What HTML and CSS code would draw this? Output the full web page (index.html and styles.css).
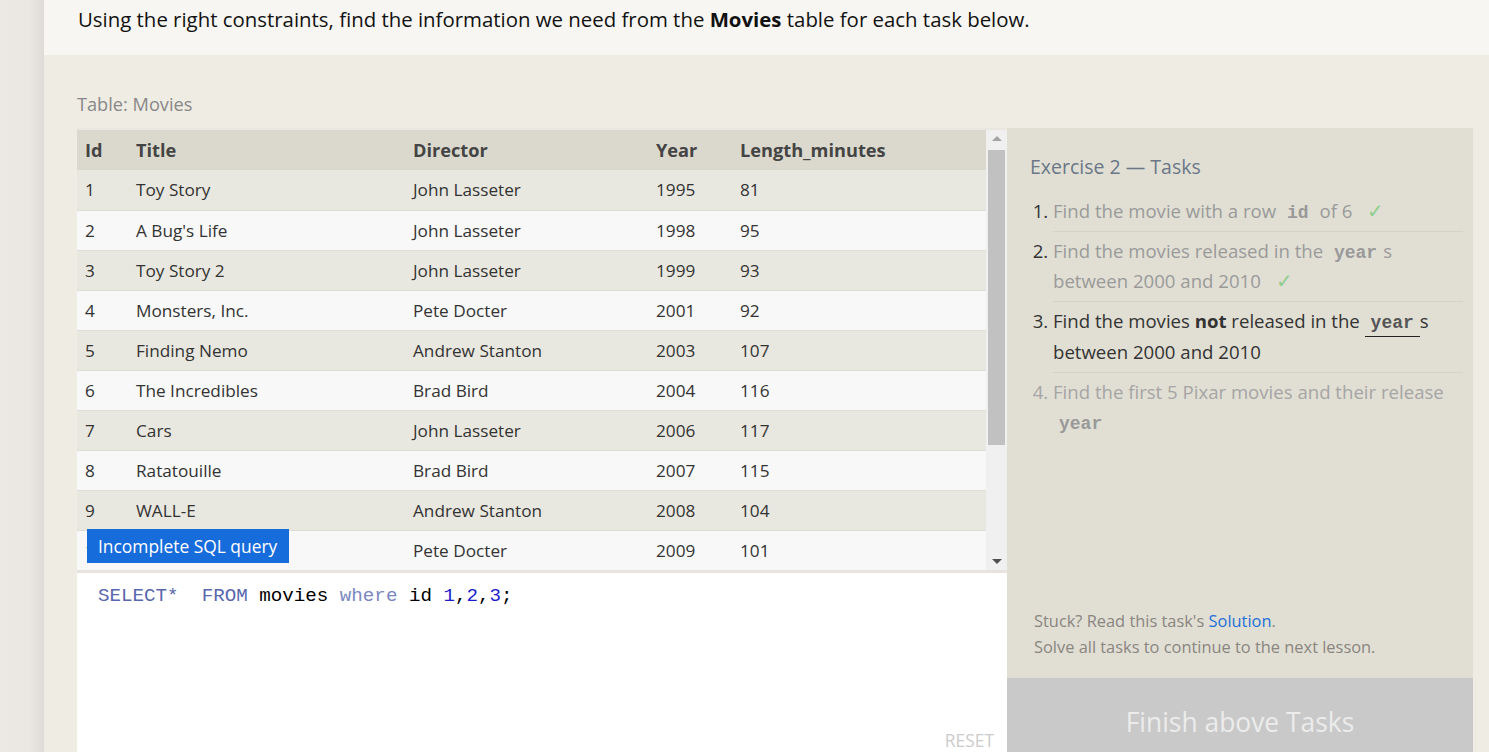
FILE: index.html
```html
<!DOCTYPE html>
<html>
<head>
<meta charset="utf-8">
<link rel="stylesheet" href="styles.css">
</head>
<body>
<div class="strip"></div>
<div class="main">
  <div class="intro">Using the right constraints, find the information we need from the <b>Movies</b> table for each task below.</div>
  <div class="content">
    <div class="table-label">Table: Movies</div>
    <div class="workspace">
      <div class="left">
        <div class="table-box">
          <div class="table-scroll">
            <table class="movies">
              <colgroup><col class="c-id"><col class="c-title"><col class="c-dir"><col class="c-year"><col></colgroup>
              <thead>
                <tr><th>Id</th><th>Title</th><th>Director</th><th>Year</th><th>Length_minutes</th></tr>
              </thead>
              <tbody>
                <tr><td>1</td><td>Toy Story</td><td>John Lasseter</td><td>1995</td><td>81</td></tr>
                <tr><td>2</td><td>A Bug's Life</td><td>John Lasseter</td><td>1998</td><td>95</td></tr>
                <tr><td>3</td><td>Toy Story 2</td><td>John Lasseter</td><td>1999</td><td>93</td></tr>
                <tr><td>4</td><td>Monsters, Inc.</td><td>Pete Docter</td><td>2001</td><td>92</td></tr>
                <tr><td>5</td><td>Finding Nemo</td><td>Andrew Stanton</td><td>2003</td><td>107</td></tr>
                <tr><td>6</td><td>The Incredibles</td><td>Brad Bird</td><td>2004</td><td>116</td></tr>
                <tr><td>7</td><td>Cars</td><td>John Lasseter</td><td>2006</td><td>117</td></tr>
                <tr><td>8</td><td>Ratatouille</td><td>Brad Bird</td><td>2007</td><td>115</td></tr>
                <tr><td>9</td><td>WALL-E</td><td>Andrew Stanton</td><td>2008</td><td>104</td></tr>
                <tr><td>10</td><td>Up</td><td>Pete Docter</td><td>2009</td><td>101</td></tr>
              </tbody>
            </table>
            <div class="tooltip">Incomplete SQL query</div>
          </div>
          <div class="scrollbar">
            <div class="arrow up"></div>
            <div class="thumb"></div>
            <div class="arrow down"></div>
          </div>
        </div>
        <div class="editor">
          <div class="code"><span class="kw">SELECT*</span>  <span class="kw">FROM</span> movies <span class="kw2">where</span> id <span class="num">1</span>,<span class="num">2</span>,<span class="num">3</span>;</div>
          <div class="reset">RESET</div>
        </div>
      </div>
      <div class="right">
        <div class="panel">
          <div class="panel-title">Exercise 2 — Tasks</div>
          <ol class="tasks">
            <li class="done"><span class="t">Find the movie with a row <code>id</code> of 6 <span class="check">✓</span></span></li>
            <li class="done"><span class="t">Find the movies released in the <code>year</code>s between 2000 and 2010 <span class="check">✓</span></span></li>
            <li class="active">Find the movies <b>not</b> released in the <code class="u">year</code>s between 2000 and 2010</li>
            <li class="todo">Find the first 5 Pixar movies and their release <code>year</code></li>
          </ol>
          <div class="stuck">
            <div>Stuck? Read this task's <span class="link">Solution</span>.</div>
            <div>Solve all tasks to continue to the next lesson.</div>
          </div>
        </div>
        <div class="finish">Finish above Tasks</div>
      </div>
    </div>
  </div>
</div>
</body>
</html>
```

FILE: styles.css
```css
* { box-sizing: border-box; }
html, body { margin: 0; height: 100%; overflow: hidden; }
body {
  display: flex;
  font-family: "Open Sans", "Noto Sans", sans-serif;
  background: #efece4;
  color: #333;
}
.strip {
  width: 44px;
  flex: none;
  background: linear-gradient(to right, #ece9e5 0%, #ebe8e4 65%, #dfdbd8 100%);
}
.main { flex: 1; display: flex; flex-direction: column; min-width: 0; }
.intro {
  flex: none;
  height: 55px;
  background: #f7f6f2;
  padding: 4px 0 0 34px;
  font-size: 20.4px;
  color: #111;
  line-height: 30px;
}
.intro b { font-weight: 700; }
.content { flex: none; padding: 0 16px 0 33px; }
.table-label {
  font-size: 18.2px;
  color: #888;
  padding-top: 36px;
  height: 73px;
  line-height: 26px;
}
.workspace { display: grid; grid-template-columns: 930px 1fr; }
.left { display: flex; flex-direction: column; }
.table-box {
  display: flex;
  height: 445px;
  padding-top: 2px;
  background: #e9e7e0;
  border-bottom: 3px solid #e6e4dd;
}
.table-scroll { position: relative; width: 909px; overflow: hidden; }
.movies {
  width: 909px;
  table-layout: fixed;
  border-collapse: collapse;
  font-size: 17.2px;
}
.c-id { width: 51px; }
.c-title { width: 277px; }
.c-dir { width: 243px; }
.c-year { width: 84px; }
.movies th {
  background: #dbd9cd;
  color: #444;
  font-weight: 700;
  font-size: 18.2px;
  text-align: left;
  height: 40px;
  padding: 0 8px;
}
.movies td {
  height: 40px;
  padding: 0 8px;
  border-bottom: 1px solid #dddcd6;
  color: #333;
}
.movies tbody tr:nth-child(odd) td { background: #e9e8e0; }
.movies tbody tr:nth-child(even) td { background: #f8f8f8; }
.tooltip {
  position: absolute;
  left: 10px;
  top: 399px;
  width: 202px;
  height: 34px;
  background: #176cdc;
  color: #fff;
  font-size: 17.4px;
  line-height: 34px;
  padding-left: 11px;
}
.scrollbar {
  width: 21px;
  background: #f0f0f0;
  display: flex;
  flex-direction: column;
  align-items: center;
}
.arrow { width: 0; height: 0; border-left: 5px solid transparent; border-right: 5px solid transparent; margin: 6px 0; }
.arrow.up { border-bottom: 5px solid #a3a3a3; }
.arrow.down { border-top: 5px solid #505050; margin-top: auto; }
.thumb { width: 17px; height: 295px; background: #c1c1c1; margin-top: 3px; }
.editor {
  background: #fff;
  height: 190px;
  padding: 10px 14px 13px 21px;
  display: flex;
  flex-direction: column;
}
.code {
  font-family: "Liberation Mono", "DejaVu Sans Mono", monospace;
  font-size: 19.2px;
  line-height: 26px;
  white-space: pre;
  color: #000;
}
.kw { color: #5867ae; }
.kw2 { color: #7b88c2; }
.num { color: #1c1ccc; }
.reset {
  margin-top: auto;
  align-self: flex-end;
  color: #cccccc;
  font-size: 17.4px;
  line-height: 20px;
  margin-right: -1px;
}
.right { display: flex; flex-direction: column; }
.panel {
  background: #e1dfd4;
  height: 550px;
  padding: 25px 10px 18px 23px;
  display: flex;
  flex-direction: column;
}
.panel-title {
  font-size: 19.5px;
  color: #6b7787;
  line-height: 28px;
  margin-bottom: 11px;
}
.tasks {
  margin: 0;
  padding-left: 23px;
  font-size: 18.6px;
  color: #333;
}
.tasks li {
  padding: 4px 0 5px;
  line-height: 30px;
  border-bottom: 1px solid #d5d3c8;
}
.tasks li:last-child { border-bottom: none; }
.tasks li.done .t { color: #9a9a9a; }
.tasks li.todo { color: #a5a5a5; }
.tasks code {
  font-family: "Liberation Mono", "DejaVu Sans Mono", monospace;
  font-weight: 700;
  font-size: 18px;
  line-height: 20px;
  padding: 0 6px;
  color: #999;
  display: inline-block;
}
.tasks li.active code { color: #555; }
.tasks code.u { border-bottom: 1px solid #222; padding-bottom: 3px; }
.check { color: #8fce8f; margin-left: 10px; font-size: 20px; line-height: 20px; }
.stuck {
  margin-top: auto;
  font-size: 16.4px;
  line-height: 26px;
  color: #8a8580;
  padding-left: 4px;
}
.link { color: #1f6fd8; }
.finish {
  height: 88px;
  background: #c9c9c9;
  color: #ececec;
  font-size: 26.4px;
  display: flex;
  align-items: center;
  justify-content: center;
}
```
